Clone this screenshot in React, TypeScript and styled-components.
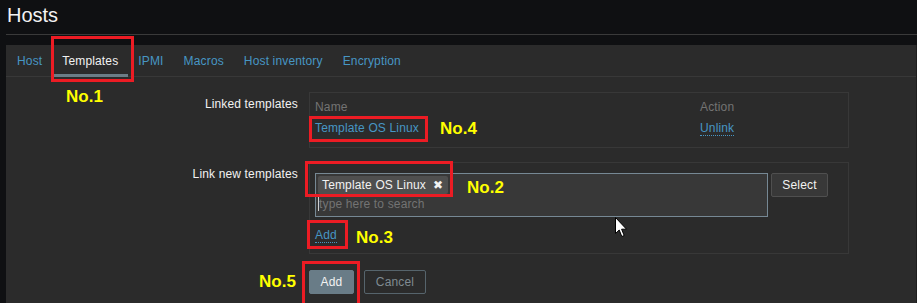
import React from "react";
import { styled, createGlobalStyle } from "styled-components";

const GlobalStyle = createGlobalStyle`
  html, body {
    margin: 0;
    padding: 0;
    background: #0f1012;
  }

  body {
    font-family: "Liberation Sans", Arial, sans-serif;
    font-size: 12px;
    letter-spacing: 0.15px;
    color: #f2f2f2;
  }

  button, input {
    letter-spacing: 0.15px;
  }
`;

const tabs = ["Host", "Templates", "IPMI", "Macros", "Host inventory", "Encryption"];

const notes = [
  { label: "No.1", box: [51, 36, 83, 46], text: [66, 88] },
  { label: "No.4", box: [309, 116, 119, 26], text: [440, 120] },
  { label: "No.2", box: [305, 161, 148, 36], text: [467, 179] },
  { label: "No.3", box: [307, 220, 41, 29], text: [356, 229] },
  { label: "No.5", box: [302, 261, 58, 45], text: [259, 273] },
];

const App: React.FC = () => {
  return (
    <Page>
      <GlobalStyle />
      <Header>
        <Title>Hosts</Title>
      </Header>

      <Panel>
        <TabBar>
          {tabs.map((tab) => (
            <Tab key={tab} $active={tab === "Templates"}>
              {tab}
            </Tab>
          ))}
        </TabBar>

        <Form>
          <Label>Linked templates</Label>
          <LinkedBox>
            <LinkedGrid>
              <HeadCell>Name</HeadCell>
              <HeadCell>Action</HeadCell>
              <Link>Template OS Linux</Link>
              <div>
                <DottedLink>Unlink</DottedLink>
              </div>
            </LinkedGrid>
          </LinkedBox>

          <Label>Link new templates</Label>
          <NewBox>
            <MultiRow>
              <MultiSelect>
                <TagList>
                  <Tag>
                    Template OS Linux
                    <TagRemove>✖</TagRemove>
                  </Tag>
                </TagList>
                <SearchRow>
                  <Caret />
                  <Search placeholder="type here to search" />
                </SearchRow>
              </MultiSelect>
              <SelectButton type="button">Select</SelectButton>
            </MultiRow>
            <AddRow>
              <DottedLink>Add</DottedLink>
            </AddRow>
          </NewBox>

          <span />
          <Actions>
            <PrimaryButton type="button">Add</PrimaryButton>
            <SecondaryButton type="button">Cancel</SecondaryButton>
          </Actions>
        </Form>
      </Panel>

      {notes.map((n) => (
        <React.Fragment key={n.label}>
          <NoteBox
            $x={n.box[0]}
            $y={n.box[1]}
            $w={n.box[2]}
            $h={n.box[3]}
          />
          <NoteText $x={n.text[0]} $y={n.text[1]}>
            {n.label}
          </NoteText>
        </React.Fragment>
      ))}

      <Pointer width="13" height="21" viewBox="0 0 13 21">
        <path
          d="M0.5 0.5 L0.5 16.5 L4.2 13 L6.8 19.5 L9.2 18.5 L6.6 12.2 L11.5 12.2 Z"
          fill="#fff"
          stroke="#000"
          strokeWidth="1"
          strokeLinejoin="miter"
        />
      </Pointer>
    </Page>
  );
};

export default App;

const Page = styled.div`
  position: relative;
  width: 917px;
  height: 303px;
  overflow: hidden;
  background: #0f1012;
`;

const Header = styled.div`
  padding-left: 6px;
  margin-bottom: 10px;
`;

const Title = styled.h1`
  margin: 0;
  height: 35px;
  padding-left: 1px;
  box-sizing: border-box;
  border-bottom: 1px solid #3a3a3a;
  font-size: 20px;
  font-weight: 400;
  line-height: 31px;
  letter-spacing: 0;
  color: #f2f2f2;
`;

const Panel = styled.div`
  margin-left: 6px;
  height: 258px;
  background: #2b2b2b;
  border-right: 1px solid #1e1e1e;
`;

const TabBar = styled.div`
  display: flex;
  height: 32px;
  padding-left: 1px;
  box-sizing: border-box;
  border-bottom: 1px solid #383838;
`;

const Tab = styled.div<{ $active?: boolean }>`
  height: 32px;
  box-sizing: border-box;
  padding: 3px 10px 0;
  line-height: 26px;
  border-bottom: 3px solid ${(p) => (p.$active ? "#6b7d87" : "transparent")};
  color: ${(p) => (p.$active ? "#f2f2f2" : "#4796c4")};
  white-space: nowrap;
`;

const Form = styled.div`
  display: grid;
  grid-template-columns: 292px 540px;
  column-gap: 11px;
  row-gap: 14px;
  padding-top: 15px;
`;

const Label = styled.div`
  text-align: right;
  padding-top: 5px;
  line-height: 14px;
  color: #f2f2f2;
`;

const LinkedBox = styled.div`
  border: 1px solid #383838;
  padding: 6px 5px 11px;
`;

const LinkedGrid = styled.div`
  display: grid;
  grid-template-columns: 385px auto;
  grid-template-rows: 16px 16px;
  row-gap: 5px;
  line-height: 16px;
`;

const HeadCell = styled.div`
  color: #737373;
`;

const Link = styled.div`
  color: #4796c4;
`;

const DottedLink = styled.span`
  display: inline-block;
  line-height: 14px;
  color: #4796c4;
  border-bottom: 1px dotted #4796c4;
`;

const NewBox = styled.div`
  border: 1px solid #383838;
  padding: 10px 5px 10px;
`;

const MultiRow = styled.div`
  display: flex;
  align-items: flex-start;
  gap: 3px;
`;

const MultiSelect = styled.div`
  width: 453px;
  height: 44px;
  box-sizing: border-box;
  padding: 2px;
  background: #383838;
  border: 1px solid #768894;
`;

const TagList = styled.div`
  display: flex;
  height: 18px;
`;

const Tag = styled.span`
  display: inline-flex;
  align-items: center;
  gap: 7px;
  height: 18px;
  padding: 0 5px 0 4px;
  background: #4f4f4f;
  border-radius: 2px;
  line-height: 18px;
  color: #f2f2f2;
`;

const TagRemove = styled.span`
  font-size: 12px;
  font-family: "DejaVu Sans", sans-serif;
  font-weight: 700;
  letter-spacing: 0;
  color: #f2f2f2;
`;

const SearchRow = styled.div`
  display: flex;
  align-items: center;
  height: 20px;
`;

const Caret = styled.span`
  width: 1px;
  height: 14px;
  background: #cfcfcf;
`;

const Search = styled.input`
  flex: 1;
  height: 20px;
  box-sizing: border-box;
  margin: 0;
  padding: 0;
  border: 0;
  outline: none;
  background: transparent;
  font-family: "Liberation Sans", Arial, sans-serif;
  font-size: 12px;
  color: #f2f2f2;

  &::placeholder {
    color: #737373;
  }
`;

const SelectButton = styled.button`
  width: 57px;
  height: 24px;
  padding: 0;
  background: #383838;
  border: 1px solid #4f4f4f;
  border-radius: 2px;
  font-family: "Liberation Sans", Arial, sans-serif;
  font-size: 12px;
  color: #f2f2f2;
`;

const AddRow = styled.div`
  margin-top: 11px;
  height: 15px;
`;

const Actions = styled.div`
  display: flex;
  gap: 10px;
  padding-top: 2px;
`;

const PrimaryButton = styled.button`
  width: 45px;
  height: 24px;
  padding: 0;
  background: #697c87;
  border: 1px solid #697c87;
  border-radius: 2px;
  font-family: "Liberation Sans", Arial, sans-serif;
  font-size: 12px;
  color: #f2f2f2;
`;

const SecondaryButton = styled.button`
  width: 62px;
  height: 24px;
  padding: 0;
  background: transparent;
  border: 1px solid #56646c;
  border-radius: 2px;
  font-family: "Liberation Sans", Arial, sans-serif;
  font-size: 12px;
  color: #7f8a91;
`;

const NoteBox = styled.div<{ $x: number; $y: number; $w: number; $h: number }>`
  position: absolute;
  left: ${(p) => p.$x}px;
  top: ${(p) => p.$y}px;
  width: ${(p) => p.$w}px;
  height: ${(p) => p.$h}px;
  box-sizing: border-box;
  border: 3px solid #ec1c24;
  pointer-events: none;
`;

const NoteText = styled.div<{ $x: number; $y: number }>`
  position: absolute;
  left: ${(p) => p.$x}px;
  top: ${(p) => p.$y}px;
  font-size: 17px;
  font-weight: 700;
  line-height: 17px;
  letter-spacing: 0;
  color: #ffff00;
  white-space: nowrap;
`;

const Pointer = styled.svg`
  position: absolute;
  left: 615px;
  top: 217px;
`;
